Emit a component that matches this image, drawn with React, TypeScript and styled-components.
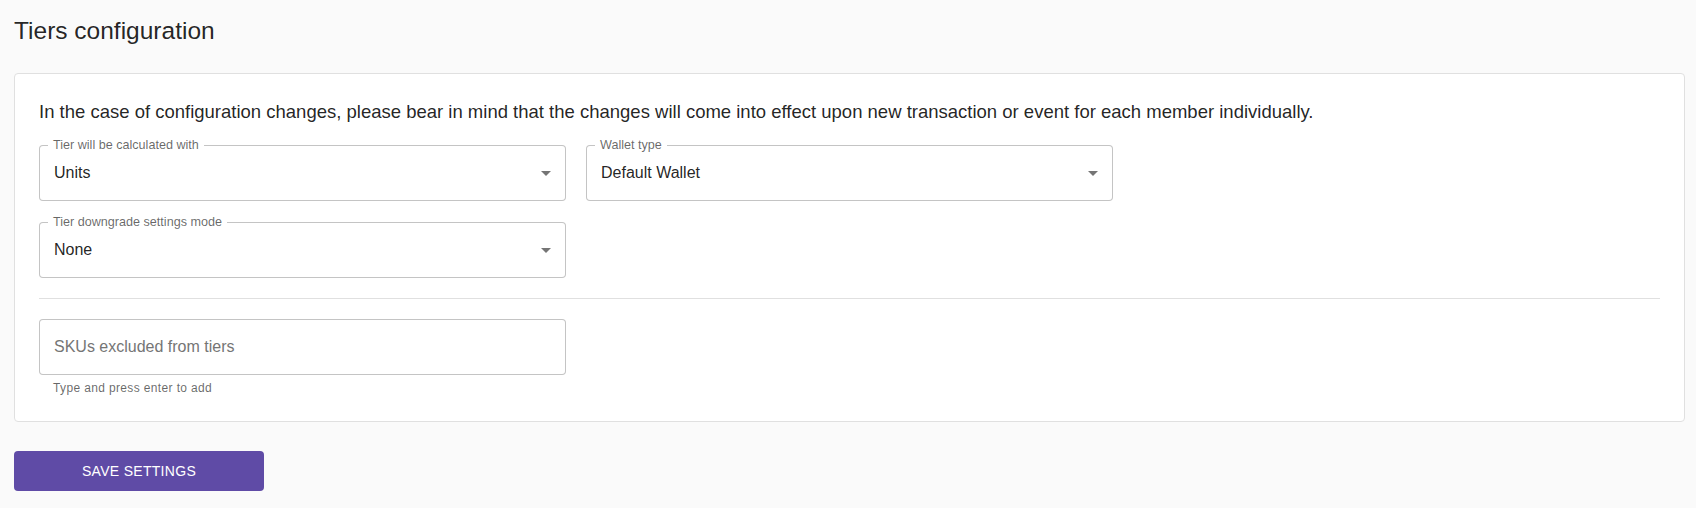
import React from "react";
import styled, { createGlobalStyle } from "styled-components";

const GlobalStyle = createGlobalStyle`
  body {
    margin: 0;
    background-color: #fafafa;
    font-family: "Liberation Sans", Arial, sans-serif;
    color: rgba(0, 0, 0, 0.87);
  }
`;

const Side = styled.div`
  padding: 15px 11px 16px 14px;
`;

const Tittel = styled.h1`
  margin: 0 0 26px;
  font-size: 24.5px;
  font-weight: 400;
  line-height: 32px;
  color: rgba(0, 0, 0, 0.87);
`;

const Kort = styled.section`
  background-color: #ffffff;
  border: 1px solid #e0e0e0;
  border-radius: 4px;
  padding: 24px 24px 23px;
`;

const Melding = styled.p`
  margin: 0 0 20px;
  font-size: 18.5px;
  line-height: 27px;
  color: rgba(0, 0, 0, 0.87);
`;

const FeltRutenett = styled.div`
  display: grid;
  grid-template-columns: repeat(3, 1fr);
  gap: 21px 20px;
`;

const Skillelinje = styled.hr`
  margin: 20px 0;
  border: none;
  border-top: 1px solid #e0e0e0;
`;

const Ramme = styled.div`
  position: relative;
  box-sizing: border-box;
  height: 56px;
  display: flex;
  align-items: center;
  padding: 0 14px;
  border: 1px solid rgba(0, 0, 0, 0.23);
  border-radius: 4px;
  background-color: #ffffff;
`;

const FlytendeEtikett = styled.span`
  position: absolute;
  top: -8px;
  left: 8px;
  padding: 0 5px;
  background-color: #ffffff;
  font-size: 12.6px;
  line-height: 14px;
  color: rgba(0, 0, 0, 0.6);
  white-space: nowrap;
`;

const Verdi = styled.span`
  font-size: 16px;
  color: rgba(0, 0, 0, 0.87);
`;

const Pil = styled.svg`
  position: absolute;
  right: 7px;
  top: 50%;
  width: 24px;
  height: 24px;
  transform: translateY(-50%);
  fill: rgba(0, 0, 0, 0.54);
`;

const Inndata = styled.input`
  width: 100%;
  border: none;
  outline: none;
  padding: 0;
  background: transparent;
  font-family: inherit;
  font-size: 16px;
  color: rgba(0, 0, 0, 0.87);

  ::placeholder {
    color: rgba(0, 0, 0, 0.6);
    opacity: 1;
  }
`;

const Hjelpetekst = styled.div`
  margin: 3px 14px 0;
  font-size: 12px;
  line-height: 20px;
  letter-spacing: 0.03em;
  color: rgba(0, 0, 0, 0.6);
`;

const LagreKnapp = styled.button`
  margin-top: 29px;
  width: 250px;
  height: 40px;
  border: none;
  border-radius: 4px;
  background-color: #5f4ba6;
  color: #ffffff;
  font-family: inherit;
  font-size: 14px;
  letter-spacing: 0.3px;
  text-transform: uppercase;
  cursor: pointer;
`;

type VelgerProps = {
  etikett: string;
  verdi: string;
};

const Velger = ({ etikett, verdi }: VelgerProps) => (
  <Ramme>
    <FlytendeEtikett>{etikett}</FlytendeEtikett>
    <Verdi>{verdi}</Verdi>
    <Pil viewBox="0 0 24 24">
      <path d="M7 10l5 5 5-5z" />
    </Pil>
  </Ramme>
);

export default function App() {
  return (
    <>
      <GlobalStyle />
      <Side>
        <Tittel>Tiers configuration</Tittel>
        <Kort>
          <Melding>
            In the case of configuration changes, please bear in mind that the changes will come
            into effect upon new transaction or event for each member individually.
          </Melding>
          <FeltRutenett>
            <Velger etikett="Tier will be calculated with" verdi="Units" />
            <Velger etikett="Wallet type" verdi="Default Wallet" />
            <div />
            <Velger etikett="Tier downgrade settings mode" verdi="None" />
          </FeltRutenett>
          <Skillelinje />
          <FeltRutenett>
            <div>
              <Ramme>
                <Inndata placeholder="SKUs excluded from tiers" />
              </Ramme>
              <Hjelpetekst>Type and press enter to add</Hjelpetekst>
            </div>
          </FeltRutenett>
        </Kort>
        <LagreKnapp>Save settings</LagreKnapp>
      </Side>
    </>
  );
}
